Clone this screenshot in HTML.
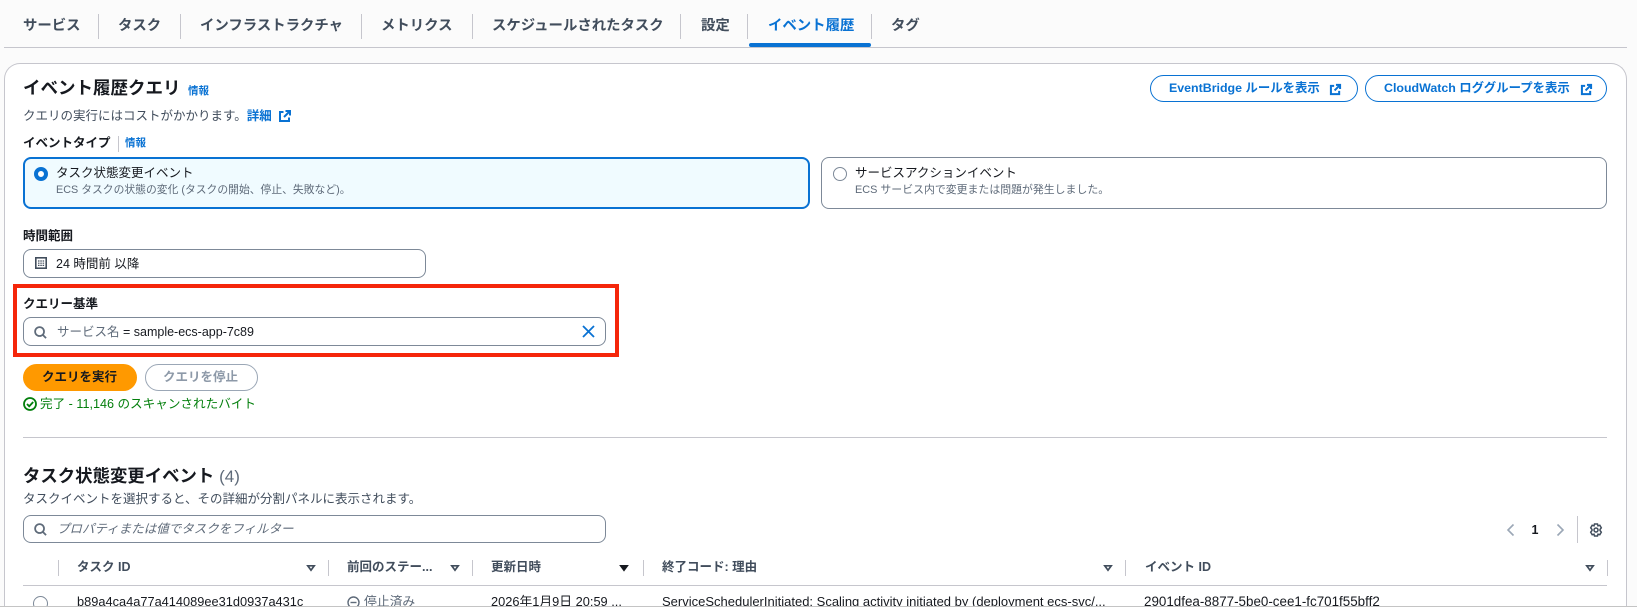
<!DOCTYPE html>
<html lang="ja"><head><meta charset="utf-8"><style>
html,body{margin:0;padding:0;background:#fff;overflow:hidden}
#p{position:relative;width:1637px;height:614px;overflow:hidden;background:#fff;font-family:"Liberation Sans","Noto Sans CJK JP",sans-serif;color:#16191f}
#c{position:absolute;left:0;top:0;width:1637px;height:606px;overflow:hidden;background:#fbfbfb;border-bottom:1px solid #c4c4c4}
.a,.t{position:absolute}
.t{white-space:nowrap;line-height:20px;height:20px;font-size:12.5px}
.b{font-weight:700}
.l{color:#0972d3}
.tab{font-size:14.4px;font-weight:700;color:#414d5c;top:15px}
.sep{position:absolute;width:1px;background:#c6c6cd}
.inp{position:absolute;background:#fff;border:1px solid #7d8998;border-radius:8px;box-sizing:border-box}
.pill{position:absolute;box-sizing:border-box;border:1px solid #0972d3;border-radius:14px;background:#fff}
.h{font-weight:700;font-size:12.5px;top:557px;color:#414d5c}
.r{font-size:12.8px;top:2px;color:#16191f}
svg{position:absolute;overflow:visible}
</style></head><body><div id="p"><div id="c">
<div class="a" style="left:4px;top:63px;width:1623px;height:543px;box-sizing:border-box;border:1px solid #c6c6cd;border-bottom:0;border-radius:16px 16px 0 0;background:#fff"></div>

<div class="t tab" style="left:23px;top:16px">サービス</div>
<div class="sep" style="left:98px;top:14px;height:25px"></div>
<div class="t tab" style="left:118px;top:16px">タスク</div>
<div class="sep" style="left:180px;top:14px;height:25px"></div>
<div class="t tab" style="left:200px;top:16px">インフラストラクチャ</div>
<div class="sep" style="left:361px;top:14px;height:25px"></div>
<div class="t tab" style="left:381px;top:16px">メトリクス</div>
<div class="sep" style="left:472px;top:14px;height:25px"></div>
<div class="t tab" style="left:492px;top:16px">スケジュールされたタスク</div>
<div class="sep" style="left:680px;top:14px;height:25px"></div>
<div class="t tab" style="left:701px;top:16px">設定</div>
<div class="sep" style="left:747px;top:14px;height:25px"></div>
<div class="t tab" style="left:768px;top:16px;color:#0972d3">イベント履歴</div>
<div class="sep" style="left:871px;top:14px;height:25px"></div>
<div class="t tab" style="left:891px;top:16px">タグ</div>
<div class="a" style="left:4px;top:47px;width:1623px;height:1px;background:#c6c6cd"></div>
<div class="a" style="left:749px;top:43px;width:122px;height:4px;background:#0972d3;border-radius:2px"></div>

<div class="t b" style="left:23px;top:77px;font-size:17.500px;line-height:22px;height:22px">イベント履歴クエリ</div>
<div class="t b l" style="left:188px;top:81px;font-size:10.500px">情報</div>
<div class="t" style="left:23px;top:106px;color:#414d5c">クエリの実行にはコストがかかります。<span class="l b">詳細</span></div>
<svg style="left:279px;top:110px" width="12" height="12" viewBox="0 0 12 12" fill="none" stroke="#0972d3" stroke-width="2"><path d="M4.500 2H1v9h9V7.500M6.500 1H11v4.500M11 1L5 7"/></svg>
<div class="t b" style="left:23px;top:133px">イベントタイプ</div>
<div class="sep" style="left:118px;top:136px;height:16px"></div>
<div class="t b l" style="left:125px;top:133px;font-size:10.500px">情報</div>

<div class="a" style="left:23px;top:157px;width:787px;height:52px;box-sizing:border-box;border:2px solid #0972d3;border-radius:8px;background:#f0fbff"></div>
<div class="a" style="left:34px;top:167px;width:14px;height:14px;box-sizing:border-box;border:4px solid #0972d3;border-radius:50%;background:#fff"></div>
<div class="t" style="left:56px;top:163px">タスク状態変更イベント</div>
<div class="t" style="left:56px;top:180px;font-size:10.800px;color:#5f6b7a">ECS タスクの状態の変化 (タスクの開始、停止、失敗など)。</div>

<div class="a" style="left:821px;top:157px;width:786px;height:52px;box-sizing:border-box;border:1px solid #7d8998;border-radius:8px;background:#fff"></div>
<div class="a" style="left:833px;top:167px;width:14px;height:14px;box-sizing:border-box;border:1px solid #7d8998;border-radius:50%;background:#fff"></div>
<div class="t" style="left:855px;top:163px">サービスアクションイベント</div>
<div class="t" style="left:855px;top:180px;font-size:10.900px;color:#5f6b7a">ECS サービス内で変更または問題が発生しました。</div>

<div class="pill" style="left:1150px;top:75px;width:208px;height:27px"></div>
<div class="t b l" style="left:1169px;top:78px;font-size:12.400px">EventBridge ルールを表示</div>
<svg style="left:1330px;top:84px" width="11" height="11" viewBox="0 0 12 12" fill="none" stroke="#0972d3" stroke-width="2.200"><path d="M4.500 2H1v9h9V7.500M6.500 1H11v4.500M11 1L5 7"/></svg>
<div class="pill" style="left:1365px;top:75px;width:242px;height:27px"></div>
<div class="t b l" style="left:1384px;top:78px;font-size:12.400px">CloudWatch ロググループを表示</div>
<svg style="left:1581px;top:84px" width="11" height="11" viewBox="0 0 12 12" fill="none" stroke="#0972d3" stroke-width="2.200"><path d="M4.500 2H1v9h9V7.500M6.500 1H11v4.500M11 1L5 7"/></svg>

<div class="t b" style="left:23px;top:226px">時間範囲</div>
<div class="inp" style="left:23px;top:249px;width:403px;height:29px"></div>
<svg style="left:35px;top:257px" width="12" height="12" viewBox="0 0 12 12" fill="none" stroke="#414d5c"><rect x=".8" y=".8" width="10.400" height="10.400" stroke-width="1.600"/><path d="M3 4h1.500M5.300 4h1.500M7.600 4h1.500M3 6.200h1.500M5.300 6.200h1.500M7.600 6.200h1.500M3 8.400h1.500M5.300 8.400h1.500M7.600 8.400h1.500" stroke-width="1.200"/></svg>
<div class="t" style="left:56px;top:254px">24 時間前 以降</div>

<div class="a" style="left:13px;top:284px;width:606px;height:73px;box-sizing:border-box;border:4px solid #f5260a"></div>
<div class="t b" style="left:23px;top:294px">クエリー基準</div>
<div class="inp" style="left:23px;top:317px;width:583px;height:29px"></div>
<svg style="left:34px;top:325.500px" width="13" height="13" viewBox="0 0 14 14" fill="none" stroke="#5f6b7a" stroke-width="1.900"><circle cx="6" cy="6" r="4.800"/><path d="M9.500 9.500L13 13"/></svg>
<div class="t" style="left:57px;top:322px"><span style="color:#5f6b7a">サービス名</span> = sample-ecs-app-7c89</div>
<svg style="left:582px;top:325px" width="13" height="13" viewBox="0 0 13 13" fill="none" stroke="#0972d3" stroke-width="1.800"><path d="M1 1l11 11M12 1L1 12"/></svg>

<div class="a" style="left:23px;top:364px;width:114px;height:27px;border-radius:14px;background:#ff9900"></div>
<div class="t b" style="left:42px;top:367px">クエリを実行</div>
<div class="a" style="left:144.500px;top:364px;width:113.500px;height:27px;box-sizing:border-box;border:1px solid #9ba7b6;border-radius:14px;background:#fff"></div>
<div class="t b" style="left:163px;top:367px;color:#8d99a8">クエリを停止</div>
<svg style="left:23px;top:397px" width="14" height="14" viewBox="0 0 14 14" fill="none" stroke="#037f0c" stroke-width="1.800"><circle cx="7" cy="7" r="6"/><path d="M4 7l2.200 2.300 4-4.300"/></svg>
<div class="t" style="left:40px;top:393.500px;color:#037f0c;font-size:12.600px">完了 - 11,146 のスキャンされたバイト</div>

<div class="a" style="left:23px;top:437px;width:1584px;height:1px;background:#c6c6cd"></div>
<div class="t b" style="left:23px;top:465px;font-size:17.400px;line-height:22px;height:22px">タスク状態変更イベント <span style="font-weight:400;color:#5f6b7a;font-size:17px">(4)</span></div>
<div class="t" style="left:23px;top:489px;color:#414d5c">タスクイベントを選択すると、その詳細が分割パネルに表示されます。</div>
<div class="inp" style="left:23px;top:515px;width:583px;height:28px"></div>
<svg style="left:33.500px;top:523px" width="13" height="13" viewBox="0 0 14 14" fill="none" stroke="#5f6b7a" stroke-width="1.900"><circle cx="6" cy="6" r="4.800"/><path d="M9.500 9.500L13 13"/></svg>
<div class="t" style="left:57px;top:519px;font-style:italic;color:#5f6b7a">プロパティまたは値でタスクをフィルター</div>

<svg style="left:1507px;top:524px" width="7" height="12" viewBox="0 0 7 12" fill="none" stroke="#9ba7b6" stroke-width="1.600"><path d="M6.500 .5L1 6l5.500 5.500"/></svg>
<div class="t b" style="left:1531.500px;top:520px;font-size:12.500px">1</div>
<svg style="left:1557px;top:524px" width="7" height="12" viewBox="0 0 7 12" fill="none" stroke="#9ba7b6" stroke-width="1.600"><path d="M.5 .5L6 6 .5 11.500"/></svg>
<div class="sep" style="left:1577px;top:516px;height:27px"></div>
<svg style="left:1589px;top:523px" width="14" height="14" viewBox="0 0 14 14" fill="none" stroke="#414d5c" stroke-width="1.500"><path d="M5.500 1h3l.5 1.800 1.800-.5 1.500 2.500L11 6.500 11 7.500l1.300 1.700-1.500 2.500-1.800-.5-.5 1.800h-3l-.5-1.800-1.800.5-1.500-2.500L3 7.500 3 6.500 1.700 4.800l1.500-2.500 1.800.5z"/><circle cx="7" cy="7" r="2"/></svg>

<div class="sep" style="left:58px;top:560px;height:16px"></div>
<div class="sep" style="left:328px;top:560px;height:16px"></div>
<div class="sep" style="left:472px;top:560px;height:16px"></div>
<div class="sep" style="left:643px;top:560px;height:16px"></div>
<div class="sep" style="left:1125px;top:560px;height:16px"></div>
<div class="sep" style="left:1607px;top:560px;height:16px"></div>
<div class="t h" style="left:77px">タスク ID</div>
<div class="t h" style="left:347px">前回のステー...</div>
<div class="t h" style="left:491px">更新日時</div>
<div class="t h" style="left:662px">終了コード: 理由</div>
<div class="t h" style="left:1145px">イベント ID</div>
<svg style="left:307px;top:565px" width="8" height="6" viewBox="0 0 8 6" fill="none" stroke="#414d5c" stroke-width="1.700"><path d="M.8 .8h6.400L4 5.200z"/></svg>
<svg style="left:451px;top:565px" width="8" height="6" viewBox="0 0 8 6" fill="none" stroke="#414d5c" stroke-width="1.700"><path d="M.8 .8h6.400L4 5.200z"/></svg>
<svg style="left:620px;top:565px" width="8" height="6" viewBox="0 0 8 6" fill="#16191f" stroke="#16191f" stroke-width="1.700"><path d="M.8 .8h6.400L4 5.200z"/></svg>
<svg style="left:1104px;top:565px" width="8" height="6" viewBox="0 0 8 6" fill="none" stroke="#414d5c" stroke-width="1.700"><path d="M.8 .8h6.400L4 5.200z"/></svg>
<svg style="left:1586px;top:565px" width="8" height="6" viewBox="0 0 8 6" fill="none" stroke="#414d5c" stroke-width="1.700"><path d="M.8 .8h6.400L4 5.200z"/></svg>
<div class="a" style="left:23px;top:585px;width:1584px;height:1px;background:#c6c6cd"></div>
<div class="a" style="left:5px;top:590px;width:1621px;height:16px;overflow:hidden">
<div class="a" style="left:28px;top:6px;width:15px;height:10px;overflow:hidden"><div class="a" style="left:0;top:0;width:15px;height:15px;box-sizing:border-box;border:1px solid #7d8998;border-radius:50%;background:#fff"></div></div>
<div class="t r" style="left:72px">b89a4ca4a77a414089ee31d0937a431c</div>
<svg style="left:342px;top:6px" width="13" height="13" viewBox="0 0 13 13" fill="none" stroke="#5f6b7a" stroke-width="1.400"><circle cx="6.500" cy="6.500" r="5.500"/><path d="M3.500 6.500h6"/></svg>
<div class="t r" style="left:359px;color:#5f6b7a">停止済み</div>
<div class="t r" style="left:486px">2026年1月9日 20:59 ...</div>
<div class="t r" style="left:657px;font-size:13px">ServiceSchedulerInitiated: Scaling activity initiated by (deployment ecs-svc/...</div>
<div class="t r" style="left:1139px;font-size:13.400px">2901dfea-8877-5be0-cee1-fc701f55bff2</div>
</div>
</div></div></body></html>
